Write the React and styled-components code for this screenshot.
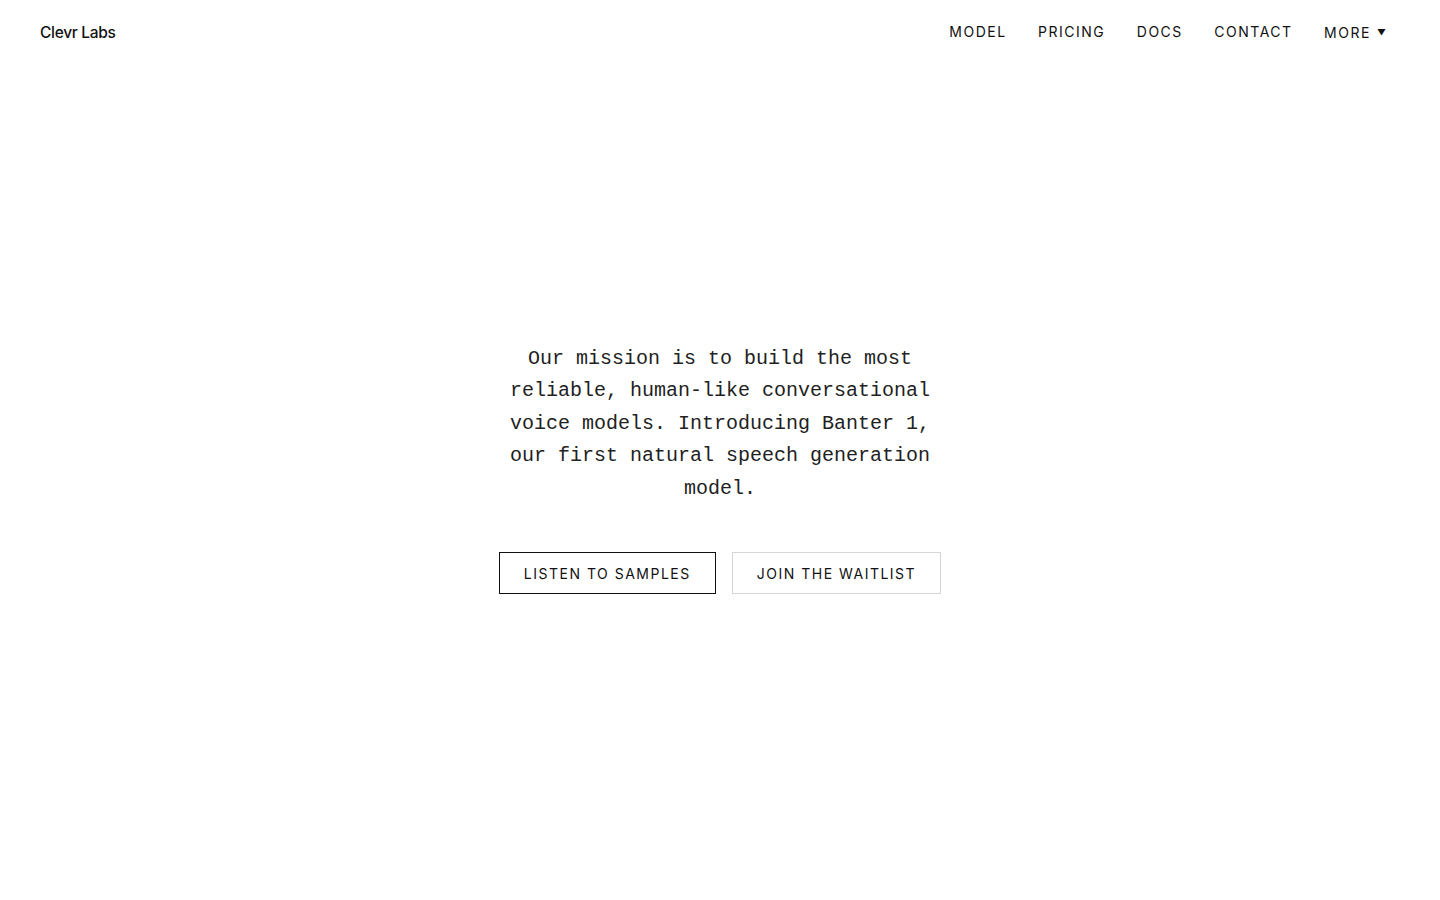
import React from 'react';
import styled, { createGlobalStyle } from 'styled-components';

// ── Global ──────────────────────────────────────────────────────────────────
const GlobalStyle = createGlobalStyle`
  * { box-sizing: border-box; }
  html, body { margin: 0; padding: 0; background: #fff; }
  body {
    font-family: Inter, "Liberation Sans", sans-serif;
    color: #111;
    -webkit-font-smoothing: antialiased;
  }
`;

// ── Styled Components ────────────────────────────────────────────────────────
const Page = styled.div`
  min-height: 100vh;
  display: flex;
  flex-direction: column;
`;

const Header = styled.header`
  height: 64px;
  padding: 0 40px;
  display: flex;
  align-items: center;
  justify-content: space-between;
`;

const Logo = styled.a`
  font-size: 15.5px;
  font-weight: 500;
  letter-spacing: -0.3px;
  color: #111;
  text-decoration: none;
`;

const Nav = styled.nav`
  display: flex;
  align-items: center;
  gap: 31.5px;
  margin-right: 13px;
  margin-top: -2px;
`;

const NavLink = styled.a`
  font-size: 14px;
  font-weight: 400;
  letter-spacing: 1.5px;
  text-transform: uppercase;
  color: #111;
  text-decoration: none;
  cursor: pointer;
  margin-top: ${(p) => (p.$drop ? '2px' : '0')};
  display: flex;
  align-items: center;
  gap: 5px;
`;

const Caret = styled.span`
  font-size: 11px;
  letter-spacing: 0;
  transform: scale(0.8, 0.75);
  margin-top: 1px;
`;

const Main = styled.main`
  flex: 1;
  display: flex;
  flex-direction: column;
  align-items: center;
  justify-content: center;
  padding-bottom: 27px;
`;

const Mission = styled.p`
  margin: 0;
  max-width: 432px;
  text-align: center;
  font-family: "Liberation Mono", "DejaVu Sans Mono", monospace;
  font-size: 20px;
  line-height: 32.5px;
  color: #222;
`;

const Actions = styled.div`
  display: flex;
  gap: 16px;
  margin-top: 47px;
`;

const Btn = styled.button`
  height: 42px;
  padding: 0 24px;
  background: #fff;
  border: 1px solid ${(p) => (p.$primary ? '#111' : '#d6d6d6')};
  font-family: Inter, "Liberation Sans", sans-serif;
  font-size: 14px;
  font-weight: 400;
  letter-spacing: 1.5px;
  text-transform: uppercase;
  color: #111;
  cursor: pointer;
`;

// ── Component ────────────────────────────────────────────────────────────────
export default function App() {
  return (
    <Page>
      <GlobalStyle />
      <Header>
        <Logo>Clevr Labs</Logo>
        <Nav>
          <NavLink>Model</NavLink>
          <NavLink>Pricing</NavLink>
          <NavLink>Docs</NavLink>
          <NavLink>Contact</NavLink>
          <NavLink $drop>
            More <Caret>▼</Caret>
          </NavLink>
        </Nav>
      </Header>

      <Main>
        <Mission>
          Our mission is to build the most reliable, human-like conversational
          voice models. Introducing Banter 1, our first natural speech
          generation model.
        </Mission>
        <Actions>
          <Btn $primary>Listen to samples</Btn>
          <Btn>Join the waitlist</Btn>
        </Actions>
      </Main>
    </Page>
  );
}
